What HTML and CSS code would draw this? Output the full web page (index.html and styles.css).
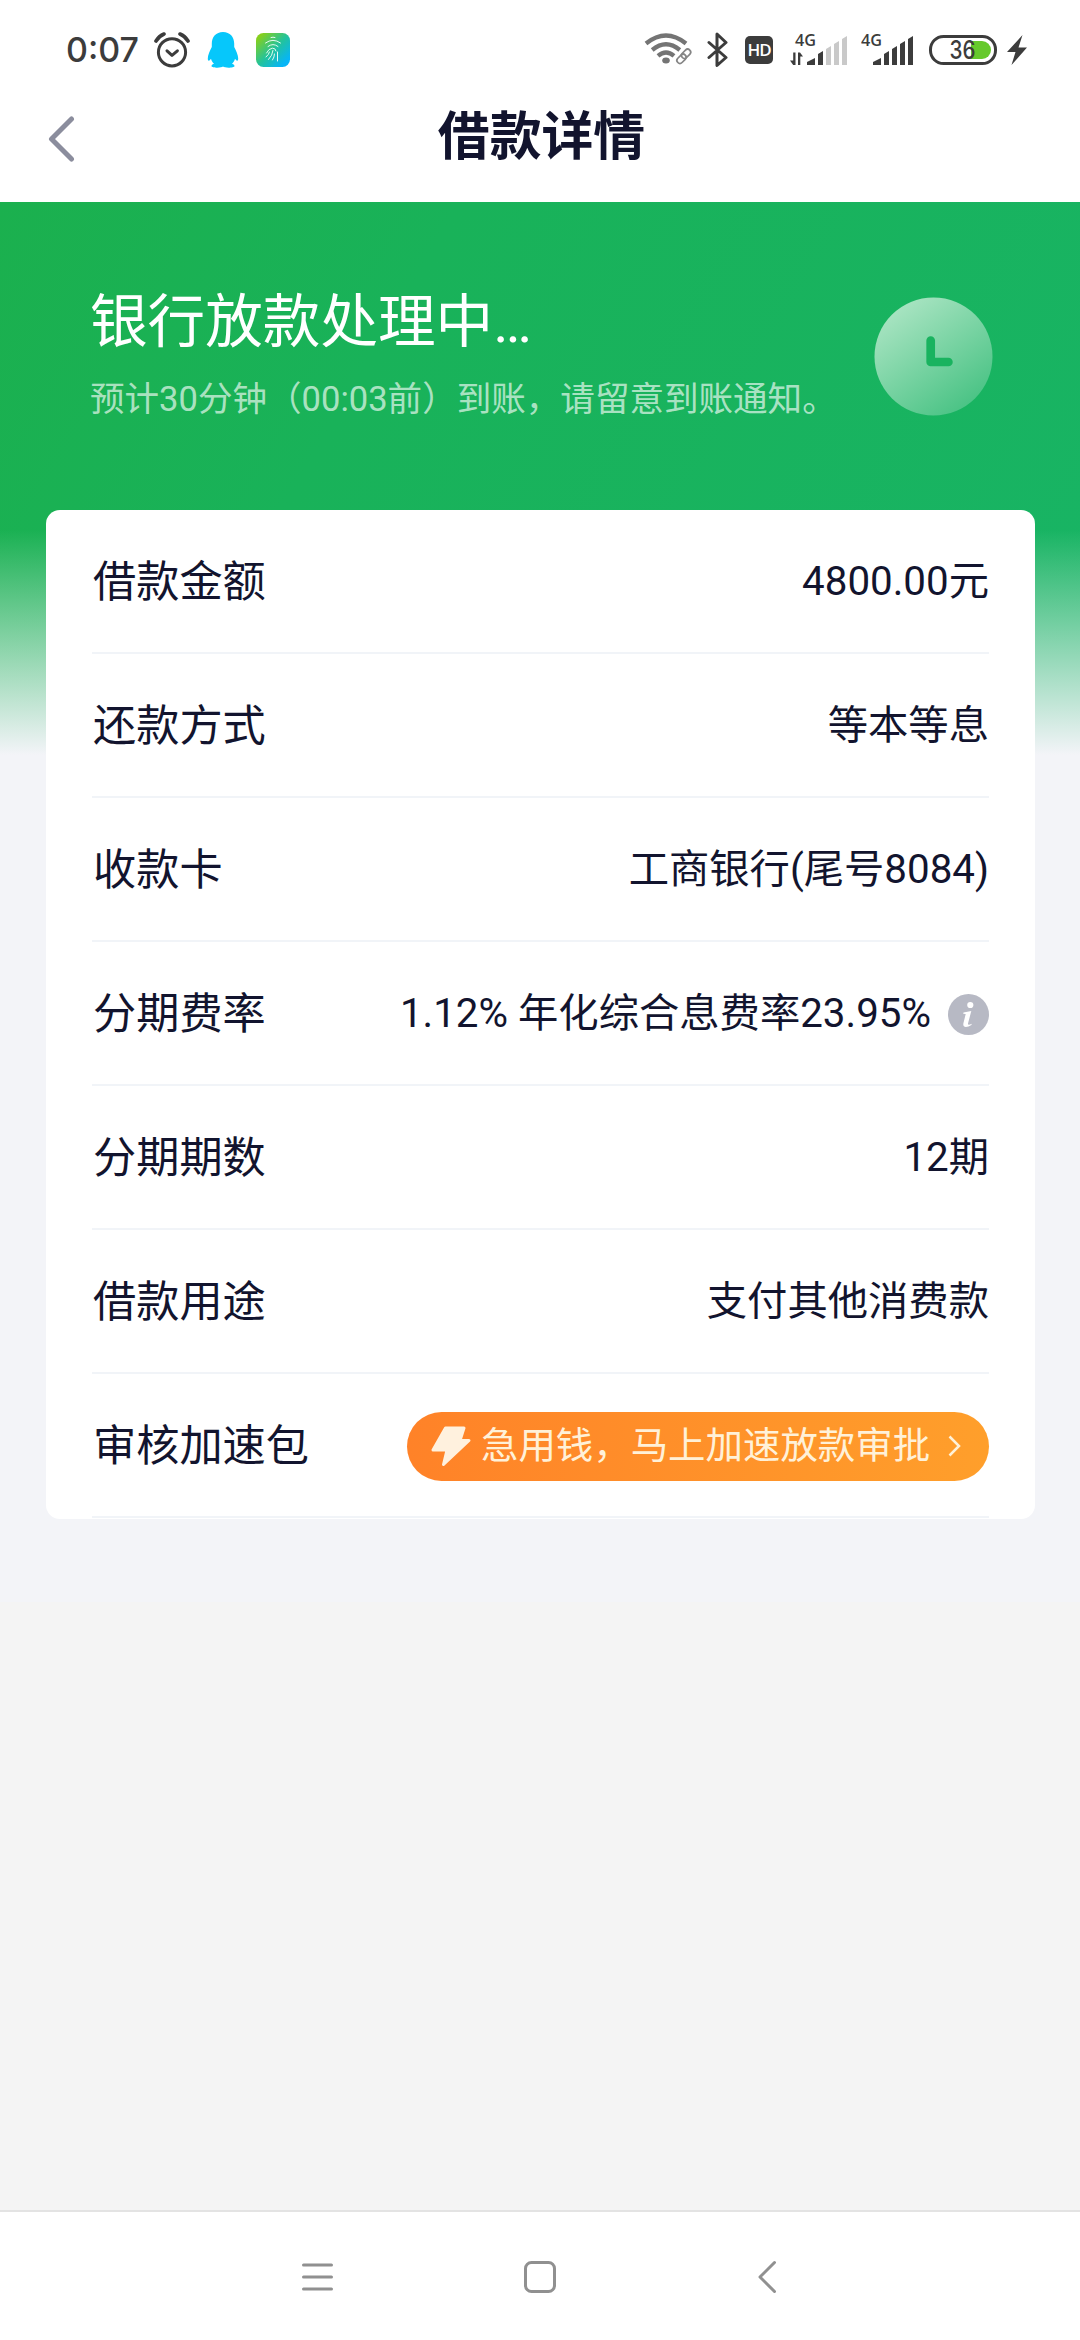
FILE: index.html
```html
<!DOCTYPE html>
<html lang="zh-CN">
<head>
<meta charset="utf-8">
<title>借款详情</title>
<link rel="stylesheet" href="styles.css">
</head>
<body>
<div class="screen">
  <div class="status">
    <div class="status-left">
      <span class="time">0:07</span>
      <svg class="alarm" width="36" height="36" viewBox="0 0 36 36" fill="none" stroke="#3c3c3c" stroke-width="3" stroke-linecap="round" stroke-linejoin="round">
        <circle cx="18" cy="20.3" r="13.6"/><path d="M13 18.8l5 4.6 5.4-4.6"/><path d="M2 9q3-5 8-7M34 9q-3-5-8-7" stroke-width="3.6"/>
      </svg>
      <svg class="qq" width="32" height="36" viewBox="0 0 32 36" fill="#06c7fb">
        <path d="M16 0C9 0 4.800 5 4.800 11.500V15C3 18.500.8 23 .8 26.500c0 3 1.500 2.800 3.200.2.500 2 1.600 3.700 3 5-1.800.6-2.500 1.500-2.500 2.300C4.500 36 14 36.200 16 34.600c2 1.600 11.500 1.400 11.500-.6 0-.8-.7-1.700-2.500-2.300 1.400-1.300 2.500-3 3-5 1.700 2.600 3.200 2.800 3.200-.2 0-3.500-2.200-8-4-11.500v-3.500C27.200 5 23 0 16 0z"/>
      </svg>
      <svg class="finger" width="34" height="34" viewBox="0 0 34 34">
        <defs><linearGradient id="fg" x1="0" y1="0" x2="1" y2="1"><stop offset=".1" stop-color="#86cf1c"/><stop offset=".5" stop-color="#23c39b"/><stop offset=".85" stop-color="#07b5f6"/></linearGradient></defs>
        <rect width="34" height="34" rx="7.500" fill="url(#fg)"/>
        <g fill="none" stroke="#e4fbf2" stroke-width="1" stroke-linecap="round"><path d="M15 4.500q2-.7 4 0M9.500 10q7.500-5.500 15 0M12 13.500q5-4 10 0M10.500 20q2-4.500 6-4.800 3-.2 3.500 2.800M10 24q3-2.500 3.500-5M12.500 26.500q4-4 4.500-9M21.500 19v9M18.500 21q0 3-2 6"/></g>
      </svg>
    </div>
    <div class="status-right">
      <svg class="wifi" width="50" height="34" viewBox="0 0 50 34" fill="none">
        <g stroke="#747474" stroke-width="4.300"><path d="M2 10.500Q22-5.500 42 10.500"/><path d="M8.200 17Q22 5.500 35.800 17"/><path d="M14 22.800Q22 16 30 22.800"/></g>
        <ellipse cx="22" cy="27.500" rx="3.800" ry="3" fill="#747474"/>
        <g stroke="#858585" stroke-width="1.700"><rect x="39" y="15.500" width="6" height="10.500" rx="3" transform="rotate(45 42 20.800)"/><rect x="34.500" y="20.500" width="6" height="10.500" rx="3" transform="rotate(45 37.500 25.800)"/></g>
      </svg>
      <svg class="bt" width="22" height="36" viewBox="0 0 22 36" fill="none" stroke="#3c3c3c" stroke-width="3" stroke-linejoin="round" stroke-linecap="round"><path d="M2 10.500l17 15-9 8V2l9 8.500-17 15"/></svg>
      <span class="hd">HD</span>
      <svg class="sig1" width="58" height="46" viewBox="0 -6 58 46">
        <text x="5" y="12.500" class="net" textLength="21" lengthAdjust="spacingAndGlyphs">4G</text>
        <g fill="#3c3c3c"><path d="M17 32v-3l8-4v7zM28 32V21l5-3v14zM3.200 19.500h2.300V32h-2.300L0 27.500h3.200zM8 32V19.500h2L13 23.500h-2.700V32z"/></g>
        <g fill="#c9c9c9"><path d="M36 32V16l5-3v19zM44 32V11l5-3v24zM52 32V6l5-3v29z"/></g>
      </svg>
      <svg class="sig2" width="54" height="46" viewBox="0 -6 54 46">
        <text x="0" y="12.500" class="net" textLength="21" lengthAdjust="spacingAndGlyphs">4G</text>
        <path fill="#3c3c3c" d="M12 32v-3l8-4v7zM23 32V21l5-3v14zM31 32V16l5-3v19zM39 32V11l5-3v24zM47 32V6l5-3v29z"/>
      </svg>
      <svg class="battery" width="68" height="30" viewBox="0 0 68 30">
        <rect x="1.500" y="1.500" width="65" height="27" rx="13" fill="none" stroke="#3c3c3c" stroke-width="3"/>
        <path d="M42 6h11a9 9 0 0 1 0 18H42z" fill="#66c92c"/>
        <text x="20.500" y="24.400" class="level" textLength="26" lengthAdjust="spacingAndGlyphs">36</text>
      </svg>
      <svg class="charge" width="20" height="30" viewBox="0 0 20 30" fill="#3c3c3c"><path d="M15.500 0L0 17h8.500L4.500 30 20 12.500h-8.500z"/></svg>
    </div>
  </div>
  <header class="nav">
    <svg class="back" width="27" height="46" viewBox="0 0 27 46" fill="none" stroke="#8b8d9d" stroke-width="5" stroke-linecap="round" stroke-linejoin="round"><path d="M23.500 3L3.500 23l20 20"/></svg>
    <h1 class="title">借款详情</h1>
  </header>
  <main class="page">
    <section class="hero">
      <div>
        <h2 class="state">银行放款处理中…</h2>
        <p class="hint">预计30分钟（00:03前）到账，请留意到账通知。</p>
      </div>
      <svg class="clock" width="119" height="119" viewBox="0 0 119 119">
        <defs><linearGradient id="cg" x1=".15" y1=".1" x2=".8" y2="1"><stop offset="0" stop-color="#a9e4c2"/><stop offset="1" stop-color="#44c181"/></linearGradient></defs>
        <circle cx="59.500" cy="59.500" r="59" fill="url(#cg)"/>
        <path d="M56.700 43.500V65h17.700" fill="none" stroke="#19b35f" stroke-width="8.700" stroke-linecap="round" stroke-linejoin="round"/>
      </svg>
    </section>
    <section class="card">
      <div class="row"><span class="label">借款金额</span><span class="value">4800.00元</span></div>
      <div class="row"><span class="label">还款方式</span><span class="value">等本等息</span></div>
      <div class="row"><span class="label">收款卡</span><span class="value">工商银行(尾号8084)</span></div>
      <div class="row"><span class="label">分期费率</span><span class="value">1.12% 年化综合息费率23.95%</span>
        <svg class="info" width="41" height="41" viewBox="0 0 41 41"><circle cx="20.500" cy="20.500" r="20.500" fill="#b7b9c4"/><circle cx="22.300" cy="11" r="3.100" fill="#fff"/><path d="M15.500 18.500l7.800-1.500-3.300 12.500q-.4 2.300 3.700.3l-.3 1.200q-3 2-5.500 2-3.200 0-2.500-3.700l2.300-9.200-2.500-.4z" fill="#fff"/></svg>
      </div>
      <div class="row"><span class="label">分期期数</span><span class="value">12期</span></div>
      <div class="row"><span class="label">借款用途</span><span class="value">支付其他消费款</span></div>
      <div class="row"><span class="label">审核加速包</span>
        <a class="boost">
          <svg width="40" height="41" viewBox="0 0 40 41" fill="#fff1de" stroke="#fff1de" stroke-width="3" stroke-linejoin="round"><path d="M14.500 2h18.500L29 14.500h9L12.500 38.500l3.500-14.500H2z"/></svg>
          <span class="boost-text">急用钱，马上加速放款审批</span>
          <svg width="13" height="22" viewBox="0 0 13 22" fill="none" stroke="#fff1d8" stroke-width="2.500"><path d="M1.500 1.500L11 11 1.500 20.500"/></svg>
        </a>
      </div>
    </section>
  </main>
  <footer class="keys">
    <svg width="32" height="34" viewBox="0 0 32 34" stroke="#909090" stroke-width="3" stroke-linecap="round"><path d="M2.500 5h28M2.500 17h28M2.500 29h28"/></svg>
    <svg width="32" height="34" viewBox="0 0 32 34" fill="none" stroke="#909090" stroke-width="3"><rect x="1.500" y="2.500" width="29" height="29" rx="6"/></svg>
    <svg width="32" height="34" viewBox="0 0 32 34" fill="none" stroke="#909090" stroke-width="3" stroke-linecap="round" stroke-linejoin="round"><path d="M27.500 2.500L13 17 27.500 31.500"/></svg>
  </footer>
</div>
</body>
</html>
```
FILE: styles.css
```css
* { box-sizing: border-box; margin: 0; padding: 0; }
body { font-family: Roboto, "Noto Sans CJK SC", sans-serif; color: #12142e; background: #fff; }
svg { display: block; flex: none; }
.screen { width: 1080px; height: 2340px; display: flex; flex-direction: column; background: #f4f4f4; overflow: hidden; }

.status { height: 82px; padding: 18px 53px 0 66px; display: flex; justify-content: space-between; align-items: center; background: #fff; }
.status-left, .status-right { display: flex; align-items: center; height: 64px; }
.time { width: 88px; font: 500 34px/64px Inter, sans-serif; letter-spacing: 0; color: #3c3c3c; }
.qq { margin-left: 17px; }
.finger { margin-left: 17px; }
.bt { margin-left: 13px; }
.hd { width: 28px; height: 28px; margin: 0 17px 0 16px; border-radius: 5px; background: #3c3c3c; color: #fff; font: 600 17px/28px "Open Sans", sans-serif; letter-spacing: -1px; text-align: center; }
.sig2 { margin-left: 13px; }
.battery { margin-left: 14px; }
.charge { margin-left: 10px; }
.net { font: 600 16.500px "Open Sans", sans-serif; fill: #3c3c3c; }
.level { font: 500 26px Inter, sans-serif; fill: #3c3c3c; }

.nav { height: 120px; padding: 0 45px 0 48px; display: grid; grid-template-columns: 27px 1fr 27px; align-items: center; background: #fff; }
.back { margin-top: -7px; }
.title { padding-bottom: 8px; font-size: 51.840px; line-height: 76px; font-weight: 700; text-align: center; }

.page { height: 1400px; background: linear-gradient(180deg, rgba(243,244,248,0) 328px, #f3f4f8 553px), linear-gradient(120deg, #1bb04e 0, #19b259 400px, #18b464 1150px); }
.hero { height: 308px; padding: 79px 87px 0 90px; display: flex; justify-content: space-between; }
.state { font-size: 57.600px; line-height: 84px; font-weight: 400; color: #fff; }
.hint { margin-top: 8px; font-size: 34.560px; line-height: 52px; color: rgba(255,255,255,.65); white-space: nowrap; }
.clock { margin-top: 16px; }

.card { margin: 0 45px 0 46px; height: 1009px; padding: 0 46px; border-radius: 14px; background: #fff; }
.row { height: 144px; padding-top: 2px; display: flex; align-items: center; border-bottom: 2px solid #f1f4f8; }
.label { margin: 2px auto 0 1px; font-size: 43.200px; line-height: 64px; }
.value { font-size: 40.320px; line-height: 60px; white-space: nowrap; }
.info { margin-left: 17px; }
.boost { width: 582px; height: 69px; padding: 0 28px 0 24px; display: flex; align-items: center; border-radius: 35px; background: linear-gradient(90deg, #ff8228, #ff9f2b); }
.boost-text { margin: 0 auto 0 10px; font-size: 37.440px; line-height: 56px; color: #fff1d8; }

.keys { height: 130px; margin-top: auto; padding: 2px 301px 0; display: flex; align-items: center; justify-content: space-between; border-top: 2px solid #e3e3e3; background: #fff; }
```
